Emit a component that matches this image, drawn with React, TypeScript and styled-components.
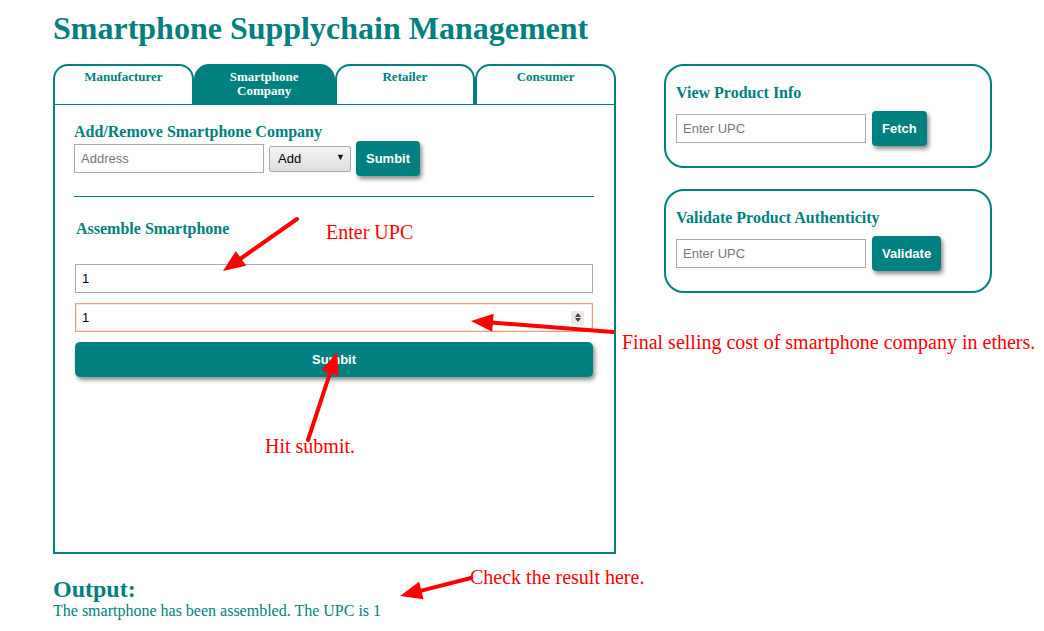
import React from "react";
import styled, { createGlobalStyle } from "styled-components";

const TEAL = "#008080";
const RED = "#ff0000";

const Global = createGlobalStyle`
  html, body { margin: 0; padding: 0; background: #fff; }
  body { font-family: "Liberation Serif", "Times New Roman", serif; }
  * { box-sizing: border-box; }
`;

const Page = styled.div`
  position: relative;
  width: 1044px;
  height: 631px;
  padding: 0 0 0 53px;
  overflow: hidden;
`;

const Title = styled.h1`
  margin: 10px 0 0;
  font-size: 32px;
  line-height: 37px;
  font-weight: bold;
  color: ${TEAL};
`;

const Main = styled.div`
  display: flex;
  align-items: flex-start;
  gap: 48px;
  margin-top: 17px;
`;

const LeftPanel = styled.div`
  width: 563px;
  display: flex;
  flex-direction: column;
`;

const TabBar = styled.div`
  display: flex;
  height: 40px;
`;

const Tab = styled.div<{ $active?: boolean }>`
  flex: 1;
  border: 2px solid ${TEAL};
  border-bottom: none;
  border-radius: 15px 15px 0 0;
  background: ${(p) => (p.$active ? TEAL : "#fff")};
  color: ${(p) => (p.$active ? "#fff" : TEAL)};
  font-weight: bold;
  font-size: 13px;
  line-height: 14px;
  text-align: center;
  padding-top: 4px;
`;

const ContentBox = styled.div`
  height: 450px;
  border: 2px solid ${TEAL};
  border-top-width: 1px;
  padding: 17px 20px 0 19px;
`;

const SectionTitle = styled.h3`
  margin: 0;
  font-size: 16px;
  line-height: 19px;
  font-weight: bold;
  color: ${TEAL};
`;

const Row = styled.div`
  display: flex;
  align-items: center;
  gap: 5px;
`;

const TextInput = styled.input<{ $w?: number }>`
  width: ${(p) => (p.$w ? `${p.$w}px` : "100%")};
  height: 29px;
  border: 1px solid #a9a9a9;
  padding: 0 6px;
  font-family: "Liberation Sans", Arial, sans-serif;
  font-size: 13px;
  color: #000;
  outline: none;
  &::placeholder { color: #777; }
`;

const SelectWrap = styled.div`
  position: relative;
  width: 82px;
  height: 26px;
`;

const Select = styled.select`
  appearance: none;
  width: 100%;
  height: 100%;
  border: 1px solid #a9a9a9;
  border-radius: 2px;
  background: linear-gradient(#f4f4f4, #dedede);
  font-family: "Liberation Sans", Arial, sans-serif;
  font-size: 13px;
  color: #000;
  padding: 0 8px;
`;

const SelectArrow = styled.span`
  position: absolute;
  right: 6px;
  top: 6px;
  font-size: 9px;
  color: #111;
  pointer-events: none;
`;

const Button = styled.button<{ $full?: boolean }>`
  height: 35px;
  width: ${(p) => (p.$full ? "100%" : "auto")};
  padding: 0 10px;
  border: none;
  border-radius: ${(p) => (p.$full ? 5 : 4)}px;
  background: ${TEAL};
  color: #fff;
  font-family: "Liberation Sans", Arial, sans-serif;
  font-weight: bold;
  font-size: 13px;
  box-shadow: 2px 3px 4px rgba(0, 0, 0, 0.45);
  cursor: pointer;
`;

const Divider = styled.div`
  margin-top: 20px;
  height: 1px;
  background: ${TEAL};
`;

const Assemble = styled.div`
  margin: 0 1px;
  padding-top: 22px;
  display: flex;
  flex-direction: column;
  gap: 10px;
`;

const AssembleTitle = styled(SectionTitle)`
  margin: 0 0 16px 1px;
`;

const NumberField = styled.div`
  display: flex;
  align-items: center;
  height: 29px;
  border: 1px solid #f0987a;
  box-shadow: inset 0 0 0 1px rgba(240, 152, 122, 0.25);
  padding-right: 8px;
`;

const BareInput = styled.input`
  flex: 1;
  height: 100%;
  border: none;
  outline: none;
  padding: 0 6px;
  font-family: "Liberation Sans", Arial, sans-serif;
  font-size: 13px;
  color: #000;
  background: transparent;
`;

const Spinner = styled.div`
  width: 13px;
  height: 14px;
  background: #e9e9e9;
  display: flex;
  flex-direction: column;
  align-items: center;
  justify-content: center;
  gap: 1px;
`;

const TriUp = styled.div`
  width: 0;
  height: 0;
  border-left: 3.5px solid transparent;
  border-right: 3.5px solid transparent;
  border-bottom: 4px solid #444;
`;

const TriDown = styled.div`
  width: 0;
  height: 0;
  border-left: 3.5px solid transparent;
  border-right: 3.5px solid transparent;
  border-top: 4px solid #444;
`;

const RightCol = styled.div`
  width: 328px;
  display: flex;
  flex-direction: column;
  gap: 21px;
`;

const Card = styled.div`
  height: 104px;
  border: 2px solid ${TEAL};
  border-radius: 20px;
  padding: 17px 10px 0 10px;
  display: flex;
  flex-direction: column;
  gap: 9px;
`;

const CardRow = styled.div`
  display: flex;
  align-items: center;
  gap: 6px;
`;

const Output = styled.div`
  margin-top: 23px;
  color: ${TEAL};
`;

const OutputTitle = styled.h2`
  margin: 0;
  font-size: 24px;
  line-height: 25px;
  font-weight: bold;
`;

const OutputText = styled.div`
  font-size: 16px;
  line-height: 18px;
`;

const Note = styled.div<{ $x: number; $y: number }>`
  position: absolute;
  left: ${(p) => p.$x}px;
  top: ${(p) => p.$y}px;
  color: ${RED};
  font-size: 20px;
  line-height: 23px;
  white-space: nowrap;
`;

const Overlay = styled.svg`
  position: absolute;
  left: 0;
  top: 0;
  pointer-events: none;
`;

function Arrow({ x1, y1, x2, y2 }: { x1: number; y1: number; x2: number; y2: number }) {
  const dx = x2 - x1;
  const dy = y2 - y1;
  const len = Math.hypot(dx, dy);
  const ux = dx / len;
  const uy = dy / len;
  const L = 22;
  const W = 9;
  const bx = x2 - ux * L;
  const by = y2 - uy * L;
  const nx = -uy;
  const ny = ux;
  const pts = `${x2},${y2} ${bx + nx * W},${by + ny * W} ${bx - nx * W},${by - ny * W}`;
  return (
    <g>
      <line x1={x1} y1={y1} x2={bx + ux * 2} y2={by + uy * 2} stroke={RED} strokeWidth={4} strokeLinecap="round" />
      <polygon points={pts} fill={RED} />
    </g>
  );
}

export default function App() {
  return (
    <>
      <Global />
      <Page>
        <Title>Smartphone Supplychain Management</Title>
        <Main>
          <LeftPanel>
            <TabBar>
              <Tab>Manufacturer</Tab>
              <Tab $active>
                Smartphone
                <br />
                Company
              </Tab>
              <Tab>Retailer</Tab>
              <Tab>Consumer</Tab>
            </TabBar>
            <ContentBox>
              <SectionTitle>Add/Remove Smartphone Company</SectionTitle>
              <Row>
                <TextInput $w={190} placeholder="Address" />
                <SelectWrap>
                  <Select defaultValue="add">
                    <option value="add">Add</option>
                    <option value="remove">Remove</option>
                  </Select>
                  <SelectArrow>▼</SelectArrow>
                </SelectWrap>
                <Button>Sumbit</Button>
              </Row>
              <Divider />
              <Assemble>
                <AssembleTitle>Assemble Smartphone</AssembleTitle>
                <TextInput defaultValue="1" />
                <NumberField>
                  <BareInput defaultValue="1" />
                  <Spinner>
                    <TriUp />
                    <TriDown />
                  </Spinner>
                </NumberField>
                <Button $full>Sumbit</Button>
              </Assemble>
            </ContentBox>
          </LeftPanel>
          <RightCol>
            <Card>
              <SectionTitle>View Product Info</SectionTitle>
              <CardRow>
                <TextInput $w={190} placeholder="Enter UPC" />
                <Button>Fetch</Button>
              </CardRow>
            </Card>
            <Card>
              <SectionTitle>Validate Product Authenticity</SectionTitle>
              <CardRow>
                <TextInput $w={190} placeholder="Enter UPC" />
                <Button>Validate</Button>
              </CardRow>
            </Card>
          </RightCol>
        </Main>
        <Output>
          <OutputTitle>Output:</OutputTitle>
          <OutputText>The smartphone has been assembled. The UPC is 1</OutputText>
        </Output>

        <Note $x={326} $y={221}>Enter UPC</Note>
        <Note $x={622} $y={331}>Final selling cost of smartphone company in ethers.</Note>
        <Note $x={265} $y={435}>Hit submit.</Note>
        <Note $x={470} $y={566}>Check the result here.</Note>
        <Overlay width={1044} height={631} viewBox="0 0 1044 631">
          <Arrow x1={297} y1={219} x2={223} y2={271} />
          <Arrow x1={613} y1={332} x2={471} y2={321} />
          <Arrow x1={308} y1={440} x2={337} y2={352} />
          <Arrow x1={471} y1={578} x2={400} y2={596} />
        </Overlay>
      </Page>
    </>
  );
}
